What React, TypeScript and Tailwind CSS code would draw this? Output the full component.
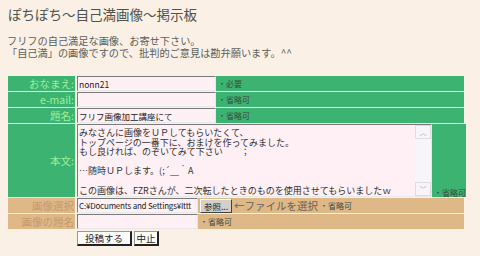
const font = "font-['Noto_Sans_CJK_JP','Liberation_Sans',sans-serif]";

const textareaText = `みなさんに画像をＵＰしてもらいたくて、
トップページの一番下に、おまけを作ってみました。
もし良ければ、のぞいてみて下さい＾＾；

…随時ＵＰします。(;´＿｀A

この画像は、FZRさんが、二次転したときのものを使用させてもらいましたｗ`;

function Note({ text }: { text: string }) {
  return (
    <span className="ml-[2px] whitespace-nowrap text-[8px] leading-none text-[#3d4a40]">・{text}</span>
  );
}

type RowProps = { label: string; tan?: boolean; tall?: boolean; children: React.ReactNode };

function Row({ label, tan, tall, children }: RowProps) {
  const bg = tan ? "bg-[#deb887]" : "bg-[#3cb371]";
  return (
    <div className={`flex gap-[2px] ${tall ? "h-[73px]" : "h-[15px]"}`}>
      <div
        className={`flex w-[67px] shrink-0 items-center justify-end whitespace-nowrap pr-[1px] text-[10.5px] leading-[15px] ${bg} ${
          tan ? "text-[#c49a70]" : "text-[#9af09a]"
        }`}
      >
        {label}
      </div>
      <div className={`flex flex-1 ${tall ? "items-end" : "items-center"} ${bg}`}>{children}</div>
    </div>
  );
}

const inputCls =
  "h-[15px] border border-t-[#7a7a7a] border-l-[#7a7a7a] border-b-[#e8e8e8] border-r-[#e8e8e8] bg-[#fff0f5] px-[1px] text-[8.5px] leading-[13px] text-[#222]";

export default function App() {
  return (
    <div className={`h-[256px] w-[480px] overflow-hidden bg-[#faf0e6] ${font}`}>
      <h1 className="ml-[8px] pt-[6px] text-[13.5px] leading-[16px] text-[#4d524d]">
        ぽちぽち〜自己満画像〜掲示板
      </h1>
      <p className="ml-[7px] mt-[13px] text-[10.2px] leading-[12px] text-[#5a5f5a]">
        フリフの自己満足な画像、お寄せ下さい。
        <br />
        「自己満」の画像ですので、批判的ご意見は勘弁願います。^^
      </p>

      <div className="ml-[8px] mt-[17px] flex w-[456px] flex-col gap-[1px]">
        <Row label="おなまえ:">
          <input readOnly value="nonn21" className={`${inputCls} w-[139px]`} />
          <Note text="必要" />
        </Row>
        <Row label="e-mail:">
          <input readOnly value="" className={`${inputCls} w-[139px]`} />
          <Note text="省略可" />
        </Row>
        <Row label="題名:">
          <input readOnly value="フリフ画像加工講座にて" className={`${inputCls} w-[139px]`} />
          <Note text="省略可" />
        </Row>
        <Row label="本文:" tall>
          <div className="flex h-[73px] w-[355px] shrink-0 border border-t-[#7a7a7a] border-l-[#7a7a7a] border-b-[#e8e8e8] border-r-[#e8e8e8] bg-[#fff0f5]">
            <div className="flex-1 overflow-hidden whitespace-pre px-[1px] pt-[3px] text-[9px] leading-[9.6px] text-[#333]">
              {textareaText}
            </div>
            <div className="flex w-[16px] shrink-0 flex-col justify-between bg-[#f7f5fa]">
              <div className="flex h-[14px] items-center justify-center border border-[#dcdce4] text-[7px] leading-none text-[#aaa]">
                ︿
              </div>
              <div className="flex h-[14px] items-center justify-center border border-[#dcdce4] text-[7px] leading-none text-[#aaa]">
                ﹀
              </div>
            </div>
          </div>
          <Note text="省略可" />
        </Row>
        <Row label="画像選択" tan>
          <input
            readOnly
            value="C:¥Documents and Settings¥Ittt"
            className={`${inputCls} w-[121px] text-[8px] tracking-[-0.2px]`}
          />
          <span className="ml-[2px] h-[14px] whitespace-nowrap border border-t-[#fff] border-l-[#fff] border-b-[#404040] border-r-[#404040] bg-[#d4d0c8] px-[3px] text-[8.5px] leading-[12px] text-[#222]">
            参照...
          </span>
          <span className="ml-[2px] whitespace-nowrap text-[10.5px] leading-[15px] text-[#6b6056]">
            ←ファイルを選択
          </span>
          <Note text="省略可" />
        </Row>
        <Row label="画像の題名" tan>
          <input readOnly value="" className={`${inputCls} w-[121px]`} />
          <Note text="省略可" />
        </Row>
        <div className="ml-[69px] mt-[1px] flex gap-[2px]">
          <button className="h-[15px] w-[55px] border border-b-2 border-r-2 border-t-[#999] border-l-[#999] border-b-[#222] border-r-[#222] bg-[#fbfbfb] text-[9.5px] leading-[11px] text-[#222]">
            投稿する
          </button>
          <button className="h-[15px] w-[25px] border border-b-2 border-r-2 border-t-[#999] border-l-[#999] border-b-[#222] border-r-[#222] bg-[#fbfbfb] text-[9.5px] leading-[11px] text-[#222]">
            中止
          </button>
        </div>
      </div>
    </div>
  );
}
